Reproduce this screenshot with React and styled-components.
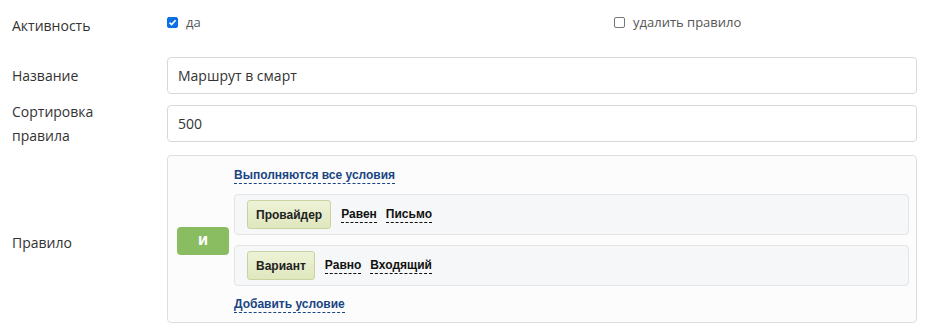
import React, { useState } from "react";
import styled, { createGlobalStyle } from "styled-components";

const GlobalStyle = createGlobalStyle`
  html, body {
    margin: 0;
    padding: 0;
    background: #fff;
  }
  body {
    font-family: "Open Sans", "Liberation Sans", sans-serif;
    font-size: 14px;
    color: #333;
  }
`;

const Form = styled.div`
  width: 933px;
  padding: 0 16px 0 12px;
  box-sizing: border-box;
`;

const Row = styled.div`
  display: grid;
  grid-template-columns: 155px 1fr;
  align-items: center;
  margin-bottom: ${(p) => p.$gap ?? 11}px;
  min-height: ${(p) => p.$height ?? 0}px;
`;

const Label = styled.div`
  font-size: 14px;
  line-height: 24px;
  color: #333;
  padding-top: ${(p) => p.$shift ?? 0}px;
  margin: ${(p) => (p.$tall ? "-6px 0" : "0")};
`;

const CheckRow = styled.div`
  display: grid;
  grid-template-columns: 447px 1fr;
  align-self: start;
  padding-top: 12px;
`;

const CheckLabel = styled.label`
  display: flex;
  align-items: center;
  gap: 8px;
  font-size: 13px;
  color: #555;
  line-height: 20px;
  cursor: pointer;
`;

const Box = styled.span`
  width: 11px;
  height: 11px;
  box-sizing: border-box;
  border-radius: 2px;
  display: inline-flex;
  align-items: center;
  justify-content: center;
  background: ${(p) => (p.$checked ? "#0b6fe6" : "#fff")};
  border: 1px solid ${(p) => (p.$checked ? "#0b6fe6" : "#767676")};
`;

const Input = styled.input`
  height: 37px;
  width: 100%;
  box-sizing: border-box;
  border: 1px solid #d6d9dc;
  border-radius: 4px;
  padding: 0 10px;
  font-family: "Open Sans", "Liberation Sans", sans-serif;
  font-size: 14px;
  color: #333;
  background: #fff;
  outline: none;
`;

const Panel = styled.div`
  border: 1px solid #dcdfe2;
  border-radius: 4px;
  background: #fcfcfd;
  display: flex;
  align-items: center;
  gap: 5px;
  padding: 0 7px 0 9px;
  height: 168px;
  box-sizing: border-box;
`;

const AndButton = styled.button`
  width: 52px;
  height: 28px;
  border: none;
  border-radius: 4px;
  background: #8abd62;
  color: #fff;
  font-family: "DejaVu Sans", sans-serif;
  font-weight: bold;
  font-size: 12px;
  margin-top: 4px;
  flex: none;
`;

const Conditions = styled.div`
  flex: 1;
  display: flex;
  flex-direction: column;
  gap: 10px;
`;

const Dashed = styled.span`
  font-family: "Liberation Sans", sans-serif;
  font-weight: bold;
  font-size: 12px;
  line-height: 15px;
  color: ${(p) => p.$color ?? "#111"};
  border-bottom: 1px dashed ${(p) => p.$color ?? "#111"};
  cursor: pointer;
`;

const Head = styled.div`
  display: flex;
  margin-top: 3px;
`;

const Foot = styled.div`
  display: flex;
  margin-top: 1px;
`;

const Condition = styled.div`
  height: 41px;
  box-sizing: border-box;
  border: 1px solid #e2e4e6;
  border-radius: 4px;
  background: #f6f7f8;
  display: flex;
  align-items: center;
  padding: 0 12px;
  gap: 9px;
`;

const Field = styled.span`
  height: 29px;
  box-sizing: border-box;
  padding: 0 8px;
  margin-right: 1px;
  display: inline-flex;
  align-items: center;
  border: 1px solid #c9d3a1;
  border-radius: 3px;
  background: linear-gradient(#eef2d8, #dfe7bd);
  font-family: "Liberation Sans", sans-serif;
  font-weight: bold;
  font-size: 12px;
  color: #222;
`;

const LINK = "#1a4583";

const conditions = [
  { field: "Провайдер", op: "Равен", value: "Письмо" },
  { field: "Вариант", op: "Равно", value: "Входящий" },
];

const Check = ({ checked }) => (
  <Box $checked={checked}>
    {checked && (
      <svg width="9" height="9" viewBox="0 0 9 9">
        <path d="M1.5 4.6 L3.6 6.6 L7.6 2.2" fill="none" stroke="#fff" strokeWidth="1.6" />
      </svg>
    )}
  </Box>
);

export default function App() {
  const [active, setActive] = useState(true);
  const [remove, setRemove] = useState(false);

  return (
    <Form>
      <GlobalStyle />
      <Row $height={45} $gap={12}>
        <Label $shift={6}>Активность</Label>
        <CheckRow>
          <CheckLabel onClick={() => setActive(!active)}>
            <Check checked={active} />
            да
          </CheckLabel>
          <CheckLabel onClick={() => setRemove(!remove)}>
            <Check checked={remove} />
            удалить правило
          </CheckLabel>
        </CheckRow>
      </Row>
      <Row>
        <Label>Название</Label>
        <Input defaultValue="Маршрут в смарт" />
      </Row>
      <Row $gap={13}>
        <Label $tall>
          Сортировка
          <br />
          правила
        </Label>
        <Input defaultValue="500" />
      </Row>
      <Row>
        <Label $shift={8}>Правило</Label>
        <Panel>
          <AndButton>И</AndButton>
          <Conditions>
            <Head>
              <Dashed $color={LINK}>Выполняются все условия</Dashed>
            </Head>
            {conditions.map((c) => (
              <Condition key={c.field}>
                <Field>{c.field}</Field>
                <Dashed>{c.op}</Dashed>
                <Dashed>{c.value}</Dashed>
              </Condition>
            ))}
            <Foot>
              <Dashed $color={LINK}>Добавить условие</Dashed>
            </Foot>
          </Conditions>
        </Panel>
      </Row>
    </Form>
  );
}
